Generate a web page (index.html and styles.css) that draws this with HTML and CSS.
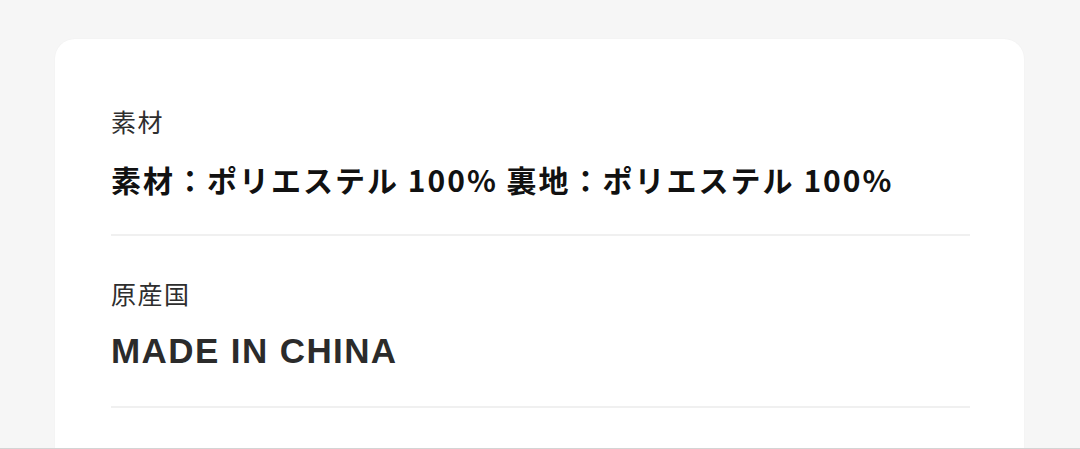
FILE: index.html
```html
<!DOCTYPE html>
<html lang="ja">
<head>
<meta charset="utf-8">
<title>商品詳細</title>
<link rel="stylesheet" href="styles.css">
</head>
<body>
<div class="page">
  <section class="card">
    <div class="spec">
      <div class="spec-label">素材</div>
      <div class="spec-value">素材：ポリエステル 100% 裏地：ポリエステル 100%</div>
    </div>
    <div class="spec spec-last">
      <div class="spec-label">原産国</div>
      <div class="spec-value latin">MADE IN CHINA</div>
    </div>
  </section>
</div>
</body>
</html>
```
FILE: styles.css
```css
html, body {
  margin: 0;
  padding: 0;
  background: #f6f6f6;
}
body {
  font-family: "Noto Sans CJK JP", "Noto Sans", sans-serif;
}
.page {
  height: 449px;
  box-sizing: border-box;
  padding: 39px 56px 0 55px;
  overflow: hidden;
  border-bottom: 1px solid #d4d4d4;
}
.card {
  background: #ffffff;
  border-radius: 20px;
  padding: 25px 54px 80px 56px;
  box-shadow: 0 0 2px rgba(0, 0, 0, 0.04);
}
.spec {
  display: flex;
  flex-direction: column;
  gap: 22px;
  padding: 41px 0 35px;
  border-bottom: 2px solid #f0f0f0;
}
.spec-label {
  font-size: 25px;
  line-height: 32px;
  color: #2e2e2e;
  letter-spacing: 1.5px;
}
.spec-value {
  font-size: 30px;
  line-height: 40px;
  font-weight: 700;
  color: #111111;
  letter-spacing: 2px;
}
.spec-value.latin {
  font-family: "Liberation Sans", Arial, sans-serif;
  font-size: 35px;
  letter-spacing: 1.4px;
  color: #2b2b2b;
}
```
